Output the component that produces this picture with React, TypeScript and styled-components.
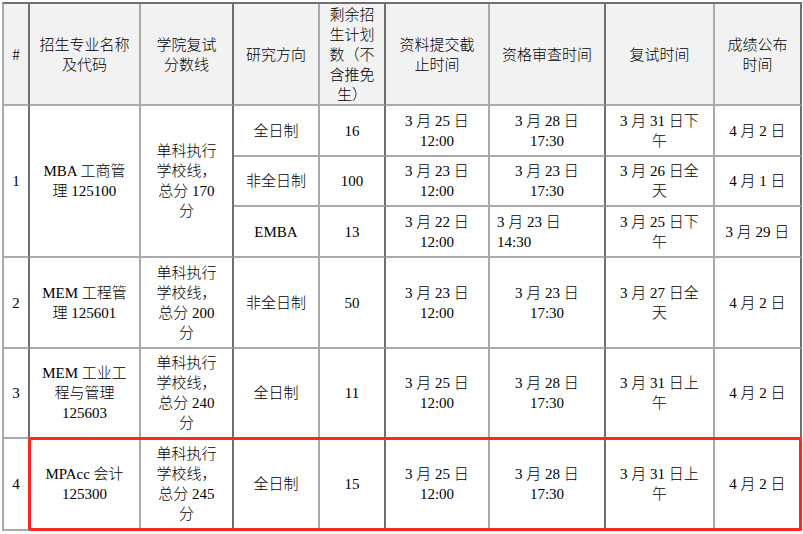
import React from "react";
import styled, { createGlobalStyle } from "styled-components";

const Global = createGlobalStyle`
  html, body { margin: 0; padding: 0; background: #ffffff; }
  body { font-family: "Liberation Serif", "Noto Sans CJK SC", serif; color: #000; }
`;

const DARK = "#6f6f6f";
const LIGHT = "#a9a9a9";
const colWidths = [26, 111, 93, 86, 66, 104, 116, 109, 87];
const colLines = [DARK, LIGHT, DARK, LIGHT, DARK, LIGHT, DARK, LIGHT, DARK];

const Page = styled.div`
  position: relative;
  padding: 2px 0 0 2px;
  width: 801px;
`;

const Table = styled.table`
  border-collapse: separate;
  border-spacing: 0;
  table-layout: fixed;
  width: 800px;
  border-left: 2px solid ${LIGHT};
  border-top: 2px solid ${DARK};
  font-size: 15px;
  line-height: 20px;
  font-weight: 300;
`;

const Row = styled.tr<{ $h: number }>`
  height: ${(p) => p.$h}px;
`;

const HeadCell = styled.th<{ $col: number }>`
  box-sizing: border-box;
  width: ${(p) => colWidths[p.$col]}px;
  background: #f2f2f2;
  font-weight: 300;
  padding: 0;
  text-align: center;
  vertical-align: middle;
  white-space: nowrap;
  border-right: 2px solid ${(p) => colLines[p.$col]};
  border-bottom: 2px solid ${LIGHT};
  font-family: "Noto Sans CJK SC", "Liberation Sans", sans-serif;
`;

const Cell = styled.td<{ $col: number; $left?: boolean }>`
  box-sizing: border-box;
  padding: ${(p) => (p.$left ? "0 0 0 7px" : "0")};
  text-align: ${(p) => (p.$left ? "left" : "center")};
  vertical-align: middle;
  white-space: nowrap;
  border-right: 2px solid ${(p) => colLines[p.$col]};
  border-bottom: 2px solid ${LIGHT};
`;

const Highlight = styled.div`
  position: absolute;
  left: 28px;
  top: 437px;
  width: 774px;
  height: 94px;
  box-sizing: border-box;
  border: 3px solid #fa2a20;
  border-radius: 3px;
  pointer-events: none;
`;

const Lines = ({ t }: { t: string }) => (
  <>
    {t.split("|").map((s, i, a) => (
      <React.Fragment key={i}>
        {s}
        {i < a.length - 1 && <br />}
      </React.Fragment>
    ))}
  </>
);

const headers = [
  "#",
  "招生专业名称|及代码",
  "学院复试|分数线",
  "研究方向",
  "剩余招|生计划|数（不|含推免|生）",
  "资料提交截|止时间",
  "资格审查时间",
  "复试时间",
  "成绩公布|时间",
];

type Sub = { dir: string; n: string; sub: string; check: string; checkLeft?: boolean; exam: string; pub: string };
type Prog = { id: string; name: string; score: string; h: number[]; subs: Sub[] };

const programs: Prog[] = [
  {
    id: "1",
    name: "MBA 工商管|理 125100",
    score: "单科执行|学校线，|总分 170|分",
    h: [51, 50, 51],
    subs: [
      { dir: "全日制", n: "16", sub: "3 月 25 日|12:00", check: "3 月 28 日|17:30", exam: "3 月 31 日下|午", pub: "4 月 2 日" },
      { dir: "非全日制", n: "100", sub: "3 月 23 日|12:00", check: "3 月 23 日|17:30", exam: "3 月 26 日全|天", pub: "4 月 1 日" },
      { dir: "EMBA", n: "13", sub: "3 月 22 日|12:00", check: "3 月 23 日|14:30", checkLeft: true, exam: "3 月 25 日下|午", pub: "3 月 29 日" },
    ],
  },
  {
    id: "2",
    name: "MEM 工程管|理 125601",
    score: "单科执行|学校线，|总分 200|分",
    h: [91],
    subs: [{ dir: "非全日制", n: "50", sub: "3 月 23 日|12:00", check: "3 月 23 日|17:30", exam: "3 月 27 日全|天", pub: "4 月 2 日" }],
  },
  {
    id: "3",
    name: "MEM 工业工|程与管理|125603",
    score: "单科执行|学校线，|总分 240|分",
    h: [90],
    subs: [{ dir: "全日制", n: "11", sub: "3 月 25 日|12:00", check: "3 月 28 日|17:30", exam: "3 月 31 日上|午", pub: "4 月 2 日" }],
  },
  {
    id: "4",
    name: "MPAcc 会计|125300",
    score: "单科执行|学校线，|总分 245|分",
    h: [92],
    subs: [{ dir: "全日制", n: "15", sub: "3 月 25 日|12:00", check: "3 月 28 日|17:30", exam: "3 月 31 日上|午", pub: "4 月 2 日" }],
  },
];

export default function App() {
  return (
    <Page>
      <Global />
      <Table>
        <thead>
          <Row $h={102}>
            {headers.map((h, i) => (
              <HeadCell key={i} $col={i}>
                <Lines t={h} />
              </HeadCell>
            ))}
          </Row>
        </thead>
        <tbody>
          {programs.map((p) =>
            p.subs.map((s, si) => (
              <Row key={p.id + si} $h={p.h[si]}>
                {si === 0 && (
                  <>
                    <Cell $col={0} rowSpan={p.subs.length}>{p.id}</Cell>
                    <Cell $col={1} rowSpan={p.subs.length}><Lines t={p.name} /></Cell>
                    <Cell $col={2} rowSpan={p.subs.length}><Lines t={p.score} /></Cell>
                  </>
                )}
                <Cell $col={3}>{s.dir}</Cell>
                <Cell $col={4}>{s.n}</Cell>
                <Cell $col={5}><Lines t={s.sub} /></Cell>
                <Cell $col={6} $left={s.checkLeft}><Lines t={s.check} /></Cell>
                <Cell $col={7}><Lines t={s.exam} /></Cell>
                <Cell $col={8}><Lines t={s.pub} /></Cell>
              </Row>
            ))
          )}
        </tbody>
      </Table>
      <Highlight />
    </Page>
  );
}
